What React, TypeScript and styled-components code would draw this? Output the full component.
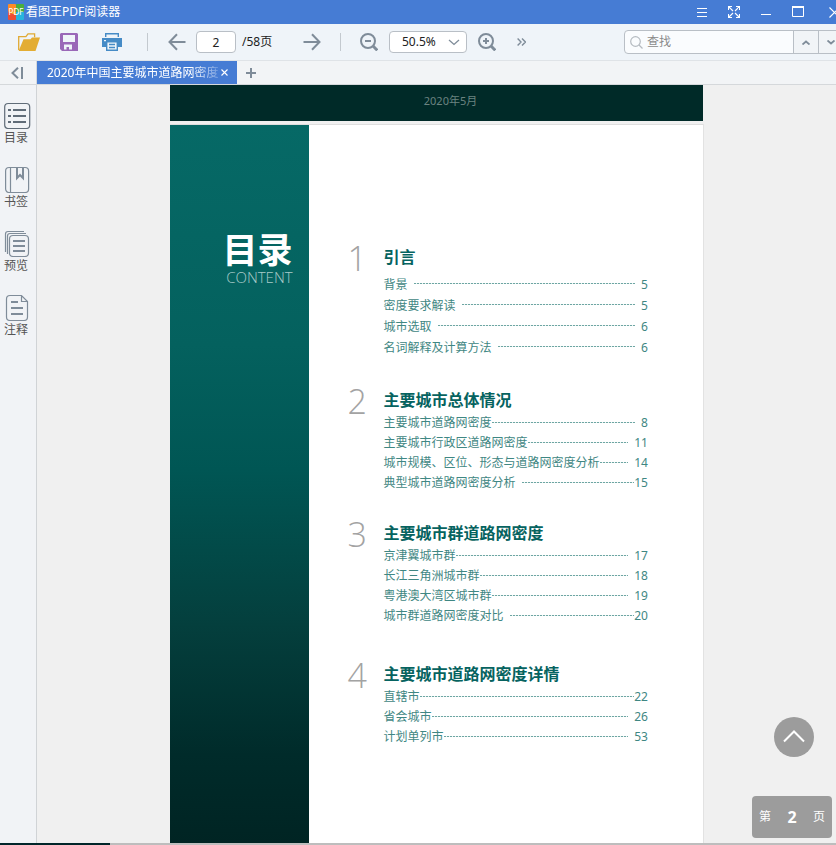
import React from "react";
import styled, { createGlobalStyle } from "styled-components";

const Global = createGlobalStyle`
  *, *::before, *::after { box-sizing: border-box; }
  body { margin: 0; overflow: hidden; }
  body, button, input, select {
    font-family: "Noto Sans", "Noto Sans CJK SC", sans-serif;
    font-size: 12px;
    line-height: 16px;
  }
  button { border: 0; padding: 0; background: none; cursor: pointer; }
`;

const Shell = styled.div`
  height: 100vh;
  display: flex;
  flex-direction: column;
  overflow: hidden;
  background: #f0f0f0;
`;

const TitleBar = styled.header`
  flex: none;
  height: 24px;
  display: flex;
  align-items: center;
  justify-content: space-between;
  padding-left: 8px;
  background: #467cd4;
  color: #fff;
  overflow: hidden;
`;

const Brand = styled.div`
  display: flex;
  align-items: center;
  gap: 2px;
  white-space: nowrap;
`;

const WindowControls = styled.div`
  display: flex;
  flex: none;
  margin-right: -14px;
`;

const WindowButton = styled.button<{ $wide?: boolean }>`
  width: ${(p) => (p.$wide ? 36 : 32)}px;
  padding-left: ${(p) => (p.$wide ? 4 : 0)}px;
  height: 22px;
  display: flex;
  align-items: center;
  justify-content: center;
  color: #fff;
`;

const Toolbar = styled.div`
  flex: none;
  height: 36px;
  display: flex;
  align-items: center;
  justify-content: space-between;
  background: #eff4f9;
  color: #222;
  overflow: hidden;
`;

const ToolGroup = styled.div`
  display: flex;
  align-items: center;
  flex: none;
`;

const ToolButton = styled.button<{ $width?: number }>`
  width: ${(p) => p.$width ?? 42}px;
  height: 36px;
  display: flex;
  align-items: center;
  justify-content: center;
  color: #7f8c99;
`;

const Divider = styled.span<{ $before: number }>`
  width: 1px;
  height: 18px;
  margin: 0 14px 0 ${(p) => p.$before}px;
  background: #c3c9cf;
`;

const PageInput = styled.input`
  width: 40px;
  height: 22px;
  margin: 0 6px 0 4px;
  padding: 0;
  border: 1px solid #b9bfc6;
  border-radius: 4px;
  background: #fff;
  color: #222;
  text-align: center;
`;

const PageTotal = styled.label`
  width: 55px;
  white-space: nowrap;
`;

const SelectWrap = styled.label`
  position: relative;
  display: flex;
  margin-left: 6px;
`;

const ZoomSelect = styled.select`
  appearance: none;
  width: 78px;
  height: 22px;
  padding: 0 24px 0 12px;
  border: 1px solid #b9bfc6;
  border-radius: 4px;
  background: #fff;
  color: #222;
`;

const SelectArrow = styled.svg`
  position: absolute;
  right: 7px;
  top: 8px;
  pointer-events: none;
`;

const SearchBox = styled.form`
  display: flex;
  flex: none;
  height: 24px;
  margin-right: -8px;
  border: 1px solid #b9bfc6;
  border-radius: 4px;
  background: #fafcfe;
  overflow: hidden;
`;

const SearchLabel = styled.label`
  display: flex;
  align-items: center;
  gap: 4px;
  width: 168px;
  padding-left: 5px;
`;

const SearchInput = styled.input`
  flex: 1;
  min-width: 0;
  border: 0;
  padding: 0;
  outline: 0;
  background: transparent;
  &::placeholder { color: #8b8b8b; opacity: 1; }
`;

const SearchStep = styled.button`
  width: 25px;
  display: flex;
  align-items: center;
  justify-content: center;
  border-left: 1px solid #b9bfc6;
  background: #f1f4f7;
  color: #7f8c99;
`;

const TabBar = styled.nav`
  flex: none;
  height: 25px;
  display: flex;
  border-top: 1px solid #dfe3e7;
  border-bottom: 1px solid #d5d8db;
  background: #f2f4f6;
`;

const CollapseButton = styled.button`
  width: 37px;
  padding-right: 3px;
  display: flex;
  align-items: center;
  justify-content: center;
  border-right: 1px solid #d5d8db;
  color: #7f8c99;
`;

const Tab = styled.div`
  width: 200px;
  display: flex;
  align-items: center;
  padding: 0 7px 0 10px;
  background: #467cd4;
  color: #fff;
`;

const TabTitle = styled.span`
  flex: 1;
  overflow: hidden;
  white-space: nowrap;
  mask-image: linear-gradient(to right, #000 84%, transparent 106%);
`;

const SmallButton = styled.button<{ $width: number; $color: string }>`
  width: ${(p) => p.$width}px;
  height: 23px;
  display: flex;
  align-items: center;
  justify-content: center;
  color: ${(p) => p.$color};
`;

const Body = styled.div`
  flex: 1;
  min-height: 0;
  display: flex;
`;

const Sidebar = styled.aside`
  flex: none;
  width: 37px;
  padding-top: 16px;
  display: flex;
  flex-direction: column;
  gap: 19px;
  border-right: 1px solid #d0d3d6;
  background: #f1f3f6;
`;

const SideButton = styled.button`
  width: 32px;
  height: 45px;
  display: flex;
  flex-direction: column;
  align-items: flex-end;
  justify-content: space-between;
  color: #7f8c99;
`;

const SideLabel = styled.span`
  width: 32px;
  text-align: center;
  color: #555;
`;

const Viewer = styled.main`
  position: relative;
  flex: 1;
  min-width: 0;
  overflow: hidden;
  display: flex;
  flex-direction: column;
  align-items: center;
  gap: 3px;
`;

const CoverPage = styled.section`
  flex: none;
  width: 66.7%;
  height: 36px;
  padding-right: 4px;
  padding-left: 32px;
  display: flex;
  justify-content: center;
  align-items: center;
  background: #002a28;
  color: #6b8380;
  font-size: 11px;
`;

const CoverDate = styled.span`
  padding-bottom: 5px;
`;

const ContentsPage = styled.section`
  flex: 1;
  width: 66.7%;
  display: flex;
  border-top: 1px solid #dedede;
  background: #fff;
  box-shadow: 1px 0 0 #e2e2e2;
`;

const Band = styled.div`
  width: 26%;
  padding: 105px 16px 0 0;
  background: linear-gradient(to bottom, #066966 0, #04615e 220px, #005654 345px, #043f3d 500px, #002b2a 630px, #002423 718px);
  color: #fff;
  text-align: right;
`;

const BandTitle = styled.h1`
  margin: 0;
  font-size: 35px;
  line-height: 40px;
  font-weight: 700;
`;

const BandSubtitle = styled.p`
  margin: 0;
  font-family: "Open Sans", sans-serif;
  font-weight: 300;
  font-size: 15px;
  line-height: 14px;
  color: #a9cbc9;
`;

const Chapters = styled.div`
  flex: 1;
  padding: 120px 55px 0 39px;
`;

const Chapter = styled.section<{ $after: number }>`
  display: grid;
  grid-template-columns: 36px 1fr;
  padding-bottom: ${(p) => p.$after}px;
`;

const ChapterNumber = styled.span`
  font-family: "Open Sans", sans-serif;
  font-weight: 300;
  font-size: 34px;
  line-height: 26px;
  color: #a3a3a3;
`;

const ChapterTitle = styled.h2<{ $gap: number }>`
  margin: 0 0 ${(p) => p.$gap}px;
  font-size: 16px;
  line-height: 24px;
  font-weight: 700;
  color: #066360;
`;

const Entries = styled.ol`
  margin: 0;
  padding: 0;
  list-style: none;
`;

const Entry = styled.li<{ $height: number }>`
  height: ${(p) => p.$height}px;
  display: flex;
  align-items: center;
  color: #3f8783;
  white-space: nowrap;
`;

const Leader = styled.span<{ $before: number; $after: number }>`
  flex: 1;
  height: 1px;
  margin: 0 ${(p) => p.$after}px 2px ${(p) => p.$before}px;
  background: repeating-linear-gradient(to right, #6ea6a3 0 2px, #edf5f4 2px 3px);
`;

const TopButton = styled.button`
  position: absolute;
  right: 22px;
  bottom: 86px;
  width: 40px;
  height: 40px;
  padding-bottom: 2px;
  display: flex;
  align-items: center;
  justify-content: center;
  border-radius: 50%;
  background: #9c9c9c;
  color: #fff;
`;

const PageBadge = styled.div`
  position: absolute;
  right: 4px;
  bottom: 5px;
  width: 80px;
  height: 42px;
  padding: 0 7px;
  display: flex;
  align-items: center;
  justify-content: space-between;
  border-radius: 4px;
  background: #9c9c9c;
  color: #fff;
`;

const PageBadgeNumber = styled.strong`
  font-size: 16px;
`;

const BottomEdge = styled.footer`
  flex: none;
  height: 2px;
  background: linear-gradient(to right, #00262a 110px, #bdbdbd 110px);
`;

type EntryData = { title: string; page: number; before: number; after: number };
type ChapterData = { title: string; gap: number; row: number; after: number; entries: EntryData[] };

const e = (title: string, page: number, before: number, after: number): EntryData => ({ title, page, before, after });

const chapters: ChapterData[] = [
  {
    title: "引言", gap: 5, row: 21, after: 30,
    entries: [e("背景", 5, 6, 6), e("密度要求解读", 5, 6, 6), e("城市选取", 6, 6, 6), e("名词解释及计算方法", 6, 6, 6)],
  },
  {
    title: "主要城市总体情况", gap: 1, row: 20, after: 28,
    entries: [
      e("主要城市道路网密度", 8, 0, 6),
      e("主要城市行政区道路网密度", 11, 0, 6),
      e("城市规模、区位、形态与道路网密度分析", 14, 0, 6),
      e("典型城市道路网密度分析", 15, 6, 0),
    ],
  },
  {
    title: "主要城市群道路网密度", gap: 1, row: 20, after: 36,
    entries: [e("京津翼城市群", 17, 0, 6), e("长江三角洲城市群", 18, 0, 6), e("粤港澳大湾区城市群", 19, 0, 6), e("城市群道路网密度对比", 20, 6, 0)],
  },
  {
    title: "主要城市道路网密度详情", gap: 1, row: 20, after: 0,
    entries: [e("直辖市", 22, 0, 0), e("省会城市", 26, 0, 6), e("计划单列市", 53, 0, 6)],
  },
];

const stroke = (width: number) => ({ fill: "none", stroke: "currentColor", strokeWidth: width });

const Logo = () => (
  <svg width="16" height="16" viewBox="0 0 16 16" aria-hidden="true">
    <rect width="8" height="8" rx="1" fill="#ff8b25" />
    <rect x="8" width="8" height="8" rx="1" fill="#4aaf3d" />
    <rect y="8" width="8" height="8" rx="1" fill="#f04e32" />
    <path d="M0 8h8v3z" fill="#f9b52d" />
    <rect x="8" y="8" width="8" height="8" rx="1" fill="#27b5dd" />
    <text x="8" y="11" textAnchor="middle" fontSize="8" fontFamily="Noto Sans" fill="#fff">PDF</text>
  </svg>
);

const FolderIcon = () => (
  <svg width="22" height="18" viewBox="0 0 22 18">
    <path d="M.7 17V3.7h7.2L10 .8h6.6v3.5" fill="none" stroke="#e0aa35" strokeWidth="1.3" />
    <path d="M5.5 6.2h7L14 4.5h8L17.5 18H.6z" fill="#e3ad34" />
  </svg>
);

const SaveIcon = () => (
  <svg width="18" height="18" viewBox="0 0 18 18">
    <path fillRule="evenodd" d="M1 0h16l1 1v17H2l-2-2V1zM3 2v7h12V2zM4 11.500v5h2.500V14H9v2.500h3v-5z" fill="#9a68b8" />
  </svg>
);

const PrintIcon = () => (
  <svg width="20" height="18" viewBox="0 0 20 18">
    <path d="M3.7 4V.7h12.6V4" fill="none" stroke="#468bc6" strokeWidth="1.4" />
    <path fillRule="evenodd" d="M0 5h20v9h-4v4H4v-4H0zM2 7v1.2h2V7zM5.4 9.4v7.2h9.2V9.4z" fill="#468bc6" />
    <path d="M7 11.5h6M7 14.5h6" stroke="#468bc6" strokeWidth="1.3" />
  </svg>
);

const ArrowIcon = ({ right }: { right?: boolean }) => (
  <svg width="18" height="18" viewBox="0 0 18 18" {...stroke(2)}>
    {right ? <path d="M.5 9h16M9 1.3 16.5 9 9 16.7" /> : <path d="M17.5 9h-16M9 1.3 1.5 9 9 16.7" />}
  </svg>
);

const ZoomIcon = ({ plus }: { plus?: boolean }) => (
  <svg width="18" height="18" viewBox="0 0 18 18" {...stroke(2)}>
    <circle cx="8" cy="8" r="7" />
    <path d="M5 8h6" />
    {plus && <path d="M8 5v6" />}
    <path d="m13 13 4.3 4.3" strokeWidth="3" />
  </svg>
);

const MoreIcon = () => (
  <svg width="9" height="8" viewBox="0 0 9 8" {...stroke(1.4)}>
    <path d="m.6.5 3.4 3.5L.6 7.5M5 .5 8.4 4 5 7.5" />
  </svg>
);

const Chevron = ({ up }: { up?: boolean }) => (
  <svg width="8" height="5" viewBox="0 0 8 5" {...stroke(1.8)}>
    <path d={up ? "m.5 4.5 3.5-3 3.5 3" : "m.5.5 3.5 3 3.5-3"} />
  </svg>
);

const sideItems = [
  {
    label: "目录",
    icon: (
      <svg width="28" height="28" viewBox="0 0 28 28" {...stroke(1.2)}>
        <rect x=".7" y="2.500" width="25" height="25" rx="3.5" stroke="#606c78" />
        <path d="M4 9h3M4 15h3M4 21h3M9 9h13M9 15h13M9 21h13" stroke="#606c78" strokeWidth="2" />
      </svg>
    ),
  },
  {
    label: "书签",
    icon: (
      <svg width="28" height="28" viewBox="0 0 28 28" {...stroke(1.2)}>
        <rect x="1.6" y="2.500" width="23" height="25" rx="3.5" />
        <path d="M6.5 2.500v25" />
        <path d="M13 3v10l3-3 3 3V3" strokeWidth="2" />
      </svg>
    ),
  },
  {
    label: "预览",
    icon: (
      <svg width="28" height="28" viewBox="0 0 28 28" {...stroke(1.2)}>
        <path d="M1.500 23V5q0-2.500 2.500-2.500h16M3.500 25V7q0-2.500 2.500-2.500h16" />
        <rect x="5.500" y="6.500" width="19" height="21" rx="3.500" />
        <path d="M9 12h12M9 17h12M9 22h12" strokeWidth="2" />
      </svg>
    ),
  },
  {
    label: "注释",
    icon: (
      <svg width="28" height="28" viewBox="0 0 28 28" {...stroke(1.2)}>
        <path d="M17.500 2.500H6Q2.500 2.500 2.500 6v18q0 3.500 3.500 3.500h14q3.500 0 3.500-3.500V8.500zv6h6" />
        <path d="M7 9h7M7 15h12M7 21h12" strokeWidth="2" />
      </svg>
    ),
  },
];

export default function App() {
  return (
    <Shell>
      <Global />
      <TitleBar>
        <Brand>
          <Logo />
          <span>看图王PDF阅读器</span>
        </Brand>
        <WindowControls>
          <WindowButton aria-label="菜单">
            <svg width="10" height="11" viewBox="0 0 10 11" {...stroke(1)}><path d="M0 1.500h10M0 5.500h10M0 9.500h10" /></svg>
          </WindowButton>
          <WindowButton aria-label="全屏">
            <svg width="12" height="12" viewBox="0 0 12 12" {...stroke(1.1)}>
              <path d="M.5 4V.500H4M8 .500h3.500V4M11.500 8v3.500H8M4 11.500H.500V8M.500.500l4.500 4.500M11.500.500 7 5M11.500 11.500 7 7M.500 11.500 5 7" />
            </svg>
          </WindowButton>
          <WindowButton aria-label="最小化">
            <svg width="10" height="12" viewBox="0 0 10 12" {...stroke(1)}><path d="M0 8.500h10" /></svg>
          </WindowButton>
          <WindowButton aria-label="最大化">
            <svg width="12" height="12" viewBox="0 0 12 12" {...stroke(1)}><path d="M.500 1v9.500h11V1" /><path d="M0 1h12" strokeWidth="2" /></svg>
          </WindowButton>
          <WindowButton aria-label="关闭" $wide>
            <svg width="11" height="11" viewBox="0 0 11 11" {...stroke(1.2)}><path d="m.5.5 10 10M10.500.500l-10 10" /></svg>
          </WindowButton>
        </WindowControls>
      </TitleBar>

      <Toolbar>
        <ToolGroup>
          <ToolButton aria-label="打开" $width={58}><FolderIcon /></ToolButton>
          <ToolButton aria-label="保存" $width={22}><SaveIcon /></ToolButton>
          <ToolButton aria-label="打印" $width={64}><PrintIcon /></ToolButton>
          <Divider $before={3} />
          <ToolButton aria-label="上一页" $width={30}><ArrowIcon /></ToolButton>
          <PageInput id="page" defaultValue="2" />
          <PageTotal htmlFor="page">/58页</PageTotal>
          <ToolButton aria-label="下一页" $width={30}><ArrowIcon right /></ToolButton>
          <Divider $before={13} />
          <ToolButton aria-label="缩小" $width={28}><ZoomIcon /></ToolButton>
          <SelectWrap>
            <ZoomSelect aria-label="缩放比例" defaultValue="50.5%">
              <option>50.5%</option>
              <option>100%</option>
            </ZoomSelect>
            <SelectArrow width="12" height="7" viewBox="0 0 12 7" fill="none" stroke="#7f8c99" strokeWidth="1.3">
              <path d="m1 1 5 4.500L11 1" />
            </SelectArrow>
          </SelectWrap>
          <ToolButton aria-label="放大" $width={40}><ZoomIcon plus /></ToolButton>
          <ToolButton aria-label="更多" $width={28}><MoreIcon /></ToolButton>
        </ToolGroup>
        <SearchBox onSubmit={(ev) => ev.preventDefault()}>
          <SearchLabel>
            <svg width="13" height="13" viewBox="0 0 13 13" fill="none" stroke="#b5bbc1" strokeWidth="1.2">
              <circle cx="5.500" cy="5.500" r="4.800" /><path d="m9 9 3.500 3.500" />
            </svg>
            <SearchInput placeholder="查找" aria-label="查找" />
          </SearchLabel>
          <SearchStep type="button" aria-label="查找上一个"><Chevron up /></SearchStep>
          <SearchStep type="button" aria-label="查找下一个"><Chevron /></SearchStep>
        </SearchBox>
      </Toolbar>

      <TabBar>
        <CollapseButton aria-label="收起侧栏">
          <svg width="12" height="12" viewBox="0 0 12 12" {...stroke(2)}><path d="M7 .800 1.500 6 7 11.200M11 0v12" /></svg>
        </CollapseButton>
        <Tab>
          <TabTitle>2020年中国主要城市道路网密度</TabTitle>
          <SmallButton aria-label="关闭标签" $width={12} $color="#fff">
            <svg width="7" height="7" viewBox="0 0 7 7" {...stroke(1.1)}><path d="m.5.5 6 6M6.500.500l-6 6" /></svg>
          </SmallButton>
        </Tab>
        <SmallButton aria-label="新建标签" $width={28} $color="#7f8c99">
          <svg width="10" height="10" viewBox="0 0 10 10" {...stroke(2)}><path d="M0 5h10M5 0v10" /></svg>
        </SmallButton>
      </TabBar>

      <Body>
        <Sidebar>
          {sideItems.map((item) => (
            <SideButton key={item.label}>
              {item.icon}
              <SideLabel>{item.label}</SideLabel>
            </SideButton>
          ))}
        </Sidebar>
        <Viewer>
          <CoverPage><CoverDate>2020年5月</CoverDate></CoverPage>
          <ContentsPage>
            <Band>
              <BandTitle>目录</BandTitle>
              <BandSubtitle>CONTENT</BandSubtitle>
            </Band>
            <Chapters>
              {chapters.map((chapter, i) => (
                <Chapter key={chapter.title} $after={chapter.after}>
                  <ChapterNumber>{i + 1}</ChapterNumber>
                  <div>
                    <ChapterTitle $gap={chapter.gap}>{chapter.title}</ChapterTitle>
                    <Entries>
                      {chapter.entries.map((entry) => (
                        <Entry key={entry.title} $height={chapter.row}>
                          <span>{entry.title}</span>
                          <Leader $before={entry.before} $after={entry.after} />
                          <span>{entry.page}</span>
                        </Entry>
                      ))}
                    </Entries>
                  </div>
                </Chapter>
              ))}
            </Chapters>
          </ContentsPage>
          <TopButton aria-label="回到顶部">
            <svg width="22" height="13" viewBox="0 0 22 13" {...stroke(2)}><path d="m1 11.500 10-10 10 10" /></svg>
          </TopButton>
          <PageBadge>
            <span>第</span>
            <PageBadgeNumber>2</PageBadgeNumber>
            <span>页</span>
          </PageBadge>
        </Viewer>
      </Body>
      <BottomEdge />
    </Shell>
  );
}
